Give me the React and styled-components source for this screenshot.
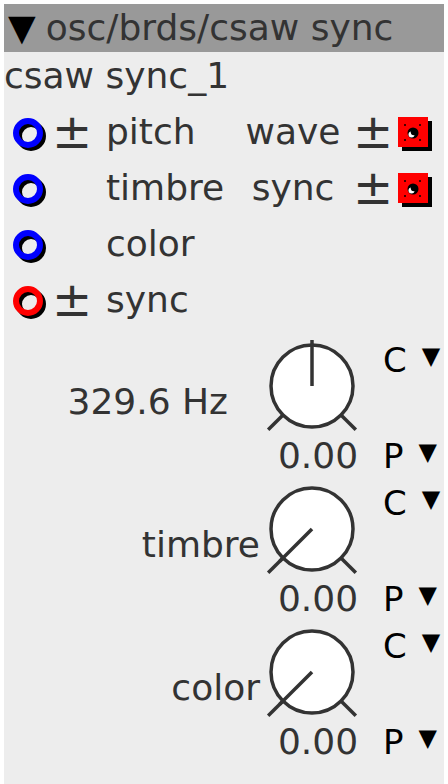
import React from "react"
import styled, { createGlobalStyle } from "styled-components"

const GlobalStyle = createGlobalStyle`
  body {
    margin: 0;
    background: #fff;
  }
`

const Panel = styled.div`
  margin: 4px 4px 0;
  width: 440px;
  min-height: 780px;
  background: #ededed;
  font-family: "DejaVu Sans", "Liberation Sans", sans-serif;
  font-size: 36px;
  color: #333;
`

const TitleBar = styled.div`
  height: 48px;
  line-height: 48px;
  background: #999;
  padding-left: 4px;
  white-space: nowrap;
`

const Caret = styled.span`
  color: #000;
  margin-right: 10px;
`

const Name = styled.div`
  line-height: 47px;
`

const Ports = styled.div`
  padding-top: 5px;
`

const PortRow = styled.div`
  display: flex;
  height: 56px;
  line-height: 56px;
  padding-left: 9px;
  white-space: nowrap;
`

const JackBox = styled.div`
  width: 34px;
  height: 34px;
  margin-top: 14px;
  svg {
    display: block;
  }
`

const Sign = styled.span`
  width: 40px;
  margin-left: ${p => p.$gap}px;
  font-size: 48px;
  line-height: 54px;
  text-align: center;
`

const Label = styled.span`
  width: 130px;
  margin-left: 14px;
`

const OutLabel = styled.span`
  width: 114px;
  text-align: center;
`

const SquareBox = styled.div`
  width: 34px;
  height: 34px;
  margin-top: 13px;
  margin-left: 5px;
  svg {
    display: block;
  }
`

const Knobs = styled.div`
  padding-top: 8px;
`

const KnobBlock = styled.div`
  display: grid;
  grid-template-columns: 258px 100px 82px;
  grid-template-rows: 100px 40px;
  margin-bottom: 3px;
  svg {
    display: block;
  }
`

const KnobLabel = styled.div`
  align-self: end;
  margin-bottom: 13px;
  line-height: 42px;
  text-align: right;
  padding-right: ${p => p.$pad}px;
  white-space: nowrap;
`

const Value = styled.div`
  grid-column: 2;
  line-height: 40px;
  text-align: center;
  padding-left: 12px;
  white-space: nowrap;
`

const Mode = styled.div`
  align-self: start;
  margin-top: ${p => p.$top}px;
  padding-left: 21px;
  height: 40px;
  line-height: 40px;
  font-size: 34px;
  color: #000;
  white-space: nowrap;
`

const ModeArrow = styled.span`
  font-size: 24px;
  line-height: 20px;
  margin-left: 15px;
  vertical-align: 8px;
`

const RoundJack = ({ color }) => (
  <JackBox>
    <svg width="34" height="34" viewBox="0 0 34 34">
      <circle cx="18" cy="18" r="12" fill="none" stroke="#000" strokeWidth="6" />
      <circle cx="15" cy="15" r="12" fill="none" stroke={color} strokeWidth="6" />
    </svg>
  </JackBox>
)

const SquareJack = () => (
  <SquareBox>
    <svg width="34" height="34" viewBox="0 0 34 34">
      <rect x="4" y="4" width="30" height="30" fill="#000" />
      <rect x="0" y="0" width="30" height="30" fill="#f00" />
      {[[7, 8], [22, 8], [7, 23], [22, 23]].map(([x, y]) => (
        <rect key={x + "-" + y} x={x - 1} y={y - 1} width="2" height="2" fill="#400" />
      ))}
      <circle cx="15" cy="16" r="5.5" fill="#000" />
      <circle cx="13.5" cy="17.5" r="3" fill="#fff" />
      <circle cx="15.8" cy="15.2" r="3" fill="#000" />
    </svg>
  </SquareBox>
)

const polar = (r, deg) => {
  const a = (deg * Math.PI) / 180
  return [50 + r * Math.sin(a), 50 - r * Math.cos(a)]
}

const Knob = ({ angle }) => {
  const [l1x, l1y] = polar(41, -135)
  const [l2x, l2y] = polar(62, -135)
  const [r1x, r1y] = polar(41, 135)
  const [r2x, r2y] = polar(62, 135)
  const [ix, iy] = polar(46, angle)
  return (
    <svg width="100" height="100" viewBox="0 0 100 100">
      <g stroke="#333" strokeWidth="3.5" fill="none">
        <line x1={l1x} y1={l1y} x2={l2x} y2={l2y} />
        <line x1={r1x} y1={r1y} x2={r2x} y2={r2y} />
        <circle cx="50" cy="50" r="41" fill="#fff" />
        <line x1="50" y1="50" x2={ix} y2={iy} />
      </g>
    </svg>
  )
}

const ports = [
  { jack: "#00f", sign: true, label: "pitch", out: "wave" },
  { jack: "#00f", sign: false, label: "timbre", out: "sync" },
  { jack: "#00f", sign: false, label: "color" },
  { jack: "#f00", sign: true, label: "sync" },
]

const knobs = [
  { label: "329.6 Hz", pad: 34, angle: 0 },
  { label: "timbre", pad: 2, angle: -135 },
  { label: "color", pad: 2, angle: -135 },
]

const App = () => {
  return (
    <>
      <GlobalStyle />
      <Panel>
        <TitleBar>
          <Caret>▼</Caret>osc/brds/csaw sync
        </TitleBar>
        <Name>csaw sync_1</Name>
        <Ports>
          {ports.map(p => (
            <PortRow key={p.label}>
              <RoundJack color={p.jack} />
              <Sign $gap={5}>{p.sign ? "±" : ""}</Sign>
              <Label>{p.label}</Label>
              {p.out && (
                <>
                  <OutLabel>{p.out}</OutLabel>
                  <Sign $gap={3}>±</Sign>
                  <SquareJack />
                </>
              )}
            </PortRow>
          ))}
        </Ports>
        <Knobs>
          {knobs.map(k => (
            <KnobBlock key={k.label}>
              <KnobLabel $pad={k.pad}>{k.label}</KnobLabel>
              <Knob angle={k.angle} />
              <Mode $top={4}>
                C<ModeArrow>▼</ModeArrow>
              </Mode>
              <Value>0.00</Value>
              <Mode $top={0}>
                P<ModeArrow>▼</ModeArrow>
              </Mode>
            </KnobBlock>
          ))}
        </Knobs>
      </Panel>
    </>
  )
}

export default App
